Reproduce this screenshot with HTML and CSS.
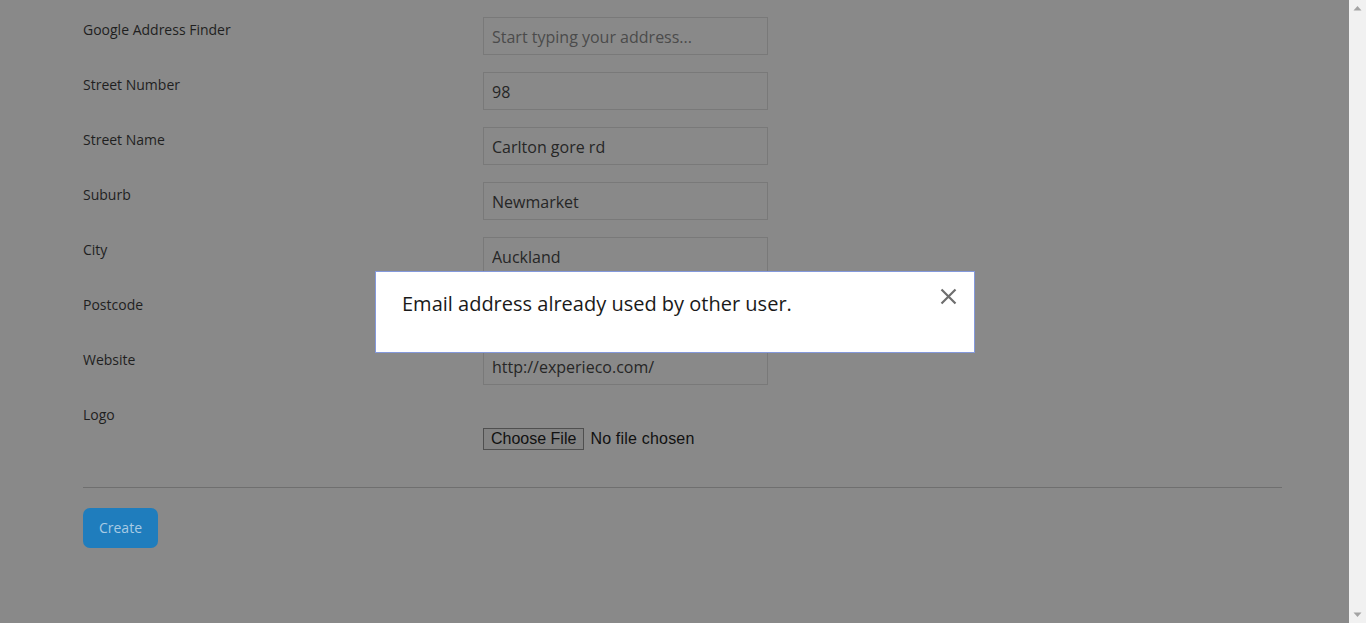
FILE: index.html
```html
<!DOCTYPE html>
<html lang="en">
<head>
<meta charset="utf-8">
<title>Create</title>
<link rel="stylesheet" href="styles.css">
</head>
<body>
<div class="page">
  <form class="form">
    <div class="row"><label class="lbl">Google Address Finder</label><input class="field" type="text" placeholder="Start typing your address..."></div>
    <div class="row"><label class="lbl">Street Number</label><input class="field" type="text" value="98"></div>
    <div class="row"><label class="lbl">Street Name</label><input class="field" type="text" value="Carlton gore rd"></div>
    <div class="row"><label class="lbl">Suburb</label><input class="field" type="text" value="Newmarket"></div>
    <div class="row"><label class="lbl">City</label><input class="field" type="text" value="Auckland"></div>
    <div class="row"><label class="lbl">Postcode</label><input class="field" type="text" value="1023"></div>
    <div class="row"><label class="lbl">Website</label><input class="field" type="text" value="http://experieco.com/"></div>
    <div class="row row-logo"><label class="lbl">Logo</label>
      <div class="file"><span class="file-btn">Choose File</span><span class="file-text">No file chosen</span></div>
    </div>
    <hr class="sep">
    <button class="btn" type="button">Create</button>
  </form>
</div>
<div class="modal">
  <p class="modal-text">Email address already used by other user.</p>
  <span class="modal-close" aria-label="close">
    <svg width="17" height="17" viewBox="0 0 17 17"><path d="M1.5 1.5 L15.5 15.5 M15.5 1.5 L1.5 15.5" stroke="#6e6e6e" stroke-width="2.2" fill="none"/></svg>
  </span>
</div>
<div class="scrollbar">
  <svg class="arrow" width="17" height="17" viewBox="0 0 17 17"><path d="M4.5 10.5 L8.5 6 L12.5 10.5 Z" fill="#a3a3a3"/></svg>
  <svg class="arrow" width="17" height="17" viewBox="0 0 17 17"><path d="M4.5 6.5 L8.5 11 L12.5 6.5 Z" fill="#a3a3a3"/></svg>
</div>
</body>
</html>
```
FILE: styles.css
```css
body {
  margin: 0;
  background: #898989;
  font-family: "Open Sans", "Liberation Sans", sans-serif;
  color: #1f1f1f;
  height: 623px;
  overflow: hidden;
}
.page { padding: 18px 0 0 83px; width: 1199px; }
.form { display: flex; flex-direction: column; }
.row { display: grid; grid-template-columns: 400px 285px; align-items: start; height: 55px; }
.lbl { font-size: 14px; line-height: 20px; padding-top: 2px; color: #1f1f1f; }
.field {
  box-sizing: border-box;
  height: 38px;
  width: 285px;
  margin: -1px 0 0;
  border: 1px solid #797979;
  background: #898989;
  padding: 2px 8px 0;
  font-family: "Open Sans", "Liberation Sans", sans-serif;
  font-size: 16px;
  color: #262626;
  outline: none;
}
.field::placeholder { color: #4b4b4b; }
.row-logo { height: 85px; }
.file { display: flex; align-items: center; margin-top: 25px; font-family: "Liberation Sans", Arial, sans-serif; font-size: 16px; }
.file-btn {
  box-sizing: border-box;
  height: 22px;
  padding: 0 7px;
  border: 1px solid #4f4f4f;
  background: #838383;
  color: #111;
  line-height: 20px;
  font-size: 16px;
}
.file-text { margin-left: 6px; color: #111; letter-spacing: 0.2px; }
.sep { margin: -1px 0 0; border: 0; border-top: 1px solid #6f6f6f; width: 1199px; }
.btn {
  margin-top: 20px;
  width: 75px;
  height: 40px;
  border: 0;
  border-radius: 7px;
  background: #1f7dbd;
  color: #a9cbe4;
  font-family: "Open Sans", "Liberation Sans", sans-serif;
  font-size: 14px;
  padding: 0 0 2px;
}
.modal {
  position: fixed;
  left: 375px;
  top: 271px;
  width: 600px;
  height: 82px;
  box-sizing: border-box;
  border: 1px solid #8499dc;
  background: #fff;
  display: flex;
  align-items: flex-start;
  justify-content: space-between;
  padding: 0 17px 0 26px;
}
.modal-text { margin: 18px 0 0; font-size: 20px; line-height: 28px; color: #1a1a1a; }
.modal-close { margin-top: 16px; display: flex; }
.scrollbar {
  position: fixed;
  top: 0;
  right: 0;
  width: 17px;
  height: 623px;
  background: #f1f1f1;
  display: flex;
  flex-direction: column;
  justify-content: space-between;
}
.arrow { display: block; }
```
